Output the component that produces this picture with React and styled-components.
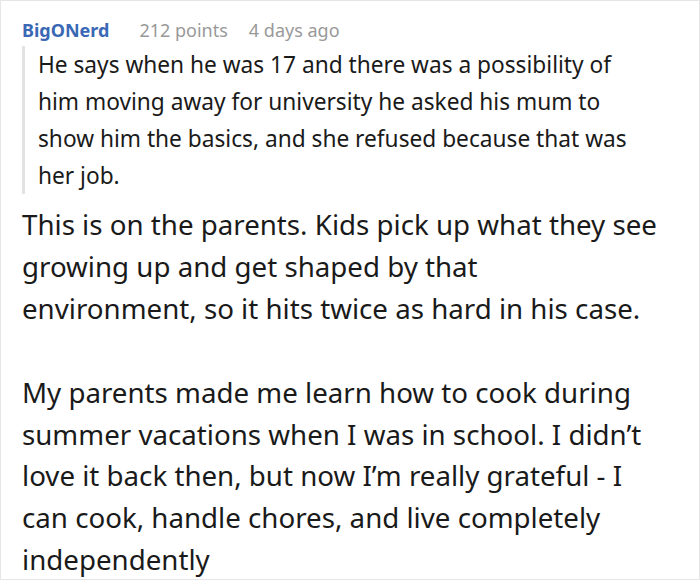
import React from "react";
import styled, { createGlobalStyle } from "styled-components";

const GlobalStyle = createGlobalStyle`
  html, body {
    margin: 0;
    padding: 0;
    background: #ffffff;
  }
  body {
    font-family: "Noto Sans", "Open Sans", sans-serif;
  }
`;

const Card = styled.div`
  width: 700px;
  height: 580px;
  box-sizing: border-box;
  border: 1px solid #e6e6e6;
  padding: 15px 40px 0 21px;
  overflow: hidden;
  background: #fff;
`;

const Meta = styled.div`
  display: flex;
  align-items: baseline;
  font-size: 18px;
  line-height: 28px;
  color: #999;
`;

const Author = styled.span`
  color: #3a68b5;
  font-weight: 700;
  margin-right: 30px;
`;

const MetaItem = styled.span`
  margin-right: 21px;
`;

const Quote = styled.blockquote`
  margin: 2px 4px 0 0;
  padding: 0 0 0 13px;
  border-left: 3px solid #e2e2e2;
  font-size: 22.7px;
  line-height: 37px;
  color: #1a1a1a;
`;

const Body = styled.div`
  margin-top: 10px;
  font-size: 27.7px;
  line-height: 41.9px;
  color: #1a1a1a;
`;

const Para = styled.p`
  margin: 0 0 41.9px 0;
`;

export default function App() {
  return (
    <>
      <GlobalStyle />
      <Card>
        <Meta>
          <Author>BigONerd</Author>
          <MetaItem>212 points</MetaItem>
          <MetaItem>4 days ago</MetaItem>
        </Meta>
        <Quote>
          He says when he was 17 and there was a possibility of him moving away
          for university he asked his mum to show him the basics, and she
          refused because that was her job.
        </Quote>
        <Body>
          <Para>
            This is on the parents. Kids pick up what they see growing up and
            get shaped by that environment, so it hits twice as hard in his
            case.
          </Para>
          <Para>
            My parents made me learn how to cook during summer vacations when I
            was in school. I didn’t love it back then, but now I’m really
            grateful - I can cook, handle chores, and live completely
            independently
          </Para>
        </Body>
      </Card>
    </>
  );
}
